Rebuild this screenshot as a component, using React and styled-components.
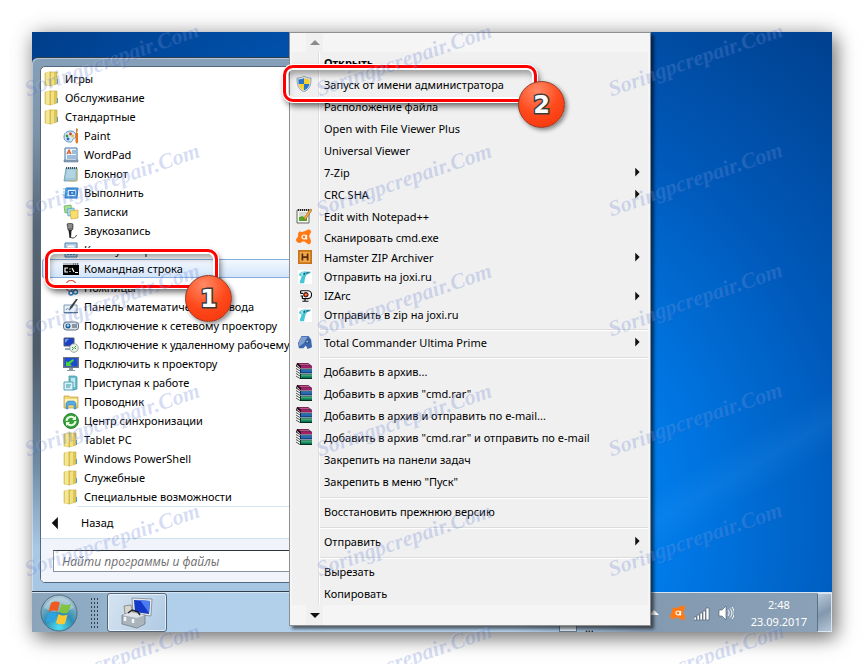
import React, { useState } from "react";
import styled, { createGlobalStyle, css } from "styled-components";

const GlobalStyle = createGlobalStyle`
  * {
    box-sizing: border-box;
  }
  body {
    margin: 0;
    background: #fff;
    font-family: "Noto Sans", "Open Sans", sans-serif;
    font-size: 11px;
    color: #000;
  }
  button {
    font: inherit;
    color: inherit;
    border: 0;
    background: none;
    padding: 0;
    text-align: left;
  }
`;

const Page = styled.div`
  position: relative;
  min-height: 100vh;
  padding: 32px;
  display: flex;
  overflow: hidden;
`;

const Desktop = styled.main`
  position: relative;
  flex: 1;
  display: flex;
  flex-direction: column;
  justify-content: flex-end;
  background: linear-gradient(
      150deg,
      transparent 77%,
      rgba(80, 180, 255, 0.1) 80%,
      transparent 83%
    ),
    radial-gradient(
      ellipse 620px 640px at 52% 82%,
      #0a8cf5 0%,
      #007ae8 36%,
      #0058b8 68%,
      #003f8c 100%
    );
  box-shadow: 4px 6px 18px rgba(0, 0, 0, 0.5), 0 0 22px rgba(0, 0, 0, 0.16);
`;

const StartMenu = styled.nav`
  width: 56%;
  padding: 8px;
  border: 1px solid #2f3c49;
  border-left: 0;
  border-radius: 6px 6px 0 0;
  box-shadow: inset 1px 1px 0 rgba(255, 255, 255, 0.4);
  background: linear-gradient(
    #86a0b9 0%,
    #7d93a8 14%,
    #566575 32%,
    #4d5a68 55%,
    #6f8aa3 76%,
    #a9c8e6 92%,
    #a6c6e4 100%
  );
`;

const Panel = styled.div`
  border: 1px solid #55687b;
  border-radius: 5px;
  background: #fff;
  overflow: hidden;
`;

const Programs = styled.div`
  display: flex;
  flex-direction: column;
  padding: 2px 0 0 1px;
`;

const activeRow = css`
  border-color: #84acdd;
  background: linear-gradient(#f3f8fe, #d3e5fb);
`;

const Program = styled.button`
  position: relative;
  display: flex;
  align-items: center;
  gap: 5px;
  height: 19px;
  padding-left: ${(p) => (p.$nested ? 20 : 1)}px;
  border: 1px solid transparent;
  border-radius: 2px;
  white-space: nowrap;
  ${(p) => p.$active && activeRow}

  svg {
    flex: none;
  }
`;

const BackRow = styled.button`
  display: flex;
  align-items: center;
  gap: 17px;
  width: 100%;
  height: 31px;
  padding-left: 9px;
`;

const Rule = styled.hr`
  height: 1px;
  margin: 0 0 0 36px;
  border: 0;
  background: #d6e5f2;
`;

const SearchBand = styled.div`
  padding: 11px 12px 10px;
  border-top: 1px solid #cfdfef;
  background: #f1f5fb;
`;

const Search = styled.input`
  display: block;
  width: 100%;
  height: 22px;
  padding: 0 8px;
  border: 1px solid #8b949e;
  border-top-color: #30343a;
  background: #fff;
  font: italic 12px "Open Sans", "Noto Sans", sans-serif;

  &::placeholder {
    color: #6d6d6d;
    opacity: 1;
  }
`;

const ContextMenu = styled.div`
  position: absolute;
  z-index: 1;
  top: 0;
  left: 257px;
  width: 362px;
  padding: 0 2px;
  border: 1px solid #8f8f8f;
  background: #f5f5f5;
  box-shadow: 3px 3px 3px rgba(0, 0, 0, 0.55);
`;

const ScrollButton = styled.button`
  display: flex;
  width: 100%;
  height: ${(p) => (p.$up ? 19 : 20)}px;
  padding-left: 14px;
`;

const ScrollFace = styled.span`
  display: grid;
  place-items: center;
  width: 17px;
  background: #f0f0f0;
`;

const Items = styled.div`
  background: linear-gradient(
      90deg,
      transparent 26px,
      #dedede 26px,
      #dedede 27px,
      #fff 27px,
      #fff 28px,
      transparent 28px
    )
    #f0f0f0;
`;

const Item = styled.button`
  position: relative;
  display: grid;
  grid-template-columns: 20px 1fr 18px;
  column-gap: 12px;
  align-items: center;
  justify-items: start;
  width: 100%;
  height: ${(p) => p.$height || 22}px;
  padding-bottom: 2px;
  font-weight: ${(p) => (p.$bold ? 700 : 400)};
  white-space: nowrap;
`;

const Icon = styled.span`
  display: flex;
  justify-self: end;
`;

const Separator = styled.hr`
  height: 8px;
  margin: 0 0 0 28px;
  border: 0;
  background: linear-gradient(
    transparent 4px,
    #dcdcdc 4px,
    #dcdcdc 5px,
    #fff 5px,
    #fff 6px,
    transparent 6px
  );
`;

const Callout = styled.span`
  position: absolute;
  z-index: 2;
  top: ${(p) => p.$top}px;
  left: ${(p) => p.$left}px;
  width: ${(p) => p.$width}px;
  height: ${(p) => p.$height}px;
  border: 3px solid #f00;
  border-radius: 10px;
  box-shadow: 0 0 0 1px #fff, inset 0 0 0 2px #fff, 2px 4px 6px rgba(0, 0, 0, 0.6),
    inset 2px 6px 6px rgba(0, 0, 0, 0.35);
`;

const Badge = styled.span`
  position: absolute;
  right: ${(p) => p.$right}px;
  bottom: ${(p) => p.$bottom}px;
  display: grid;
  place-items: center;
  width: 47px;
  height: 47px;
  border: 1px solid #8d3a26;
  border-radius: 50%;
  background: radial-gradient(circle at 40% 20%, #ff8a66, #ff4a1c 50%, #f23208);
  box-shadow: 2px 2px 4px rgba(0, 0, 0, 0.45);
  color: #fff;
  font: bold 24px "DejaVu Sans", sans-serif;
  -webkit-text-stroke: 3px #3c3c3c;
  paint-order: stroke fill;
`;

const Taskbar = styled.footer`
  display: flex;
  align-items: stretch;
  height: 40px;
  border-top: 1px solid #d5e4f2;
  background: linear-gradient(
    90deg,
    #8ba4ba 0,
    #8fabc4 7%,
    #b0cfea 17%,
    #b3d0ea 60%,
    #8299b0 76%,
    #8ba1b7 100%
  );
`;

const StartButton = styled.button`
  display: grid;
  place-items: center;
  width: 54px;
`;

const Grip = styled.span`
  width: 9px;
  margin: 4px 8px 4px 4px;
  background: radial-gradient(circle, #33404d 1px, transparent 1px) 0 0 / 3px 4px;
`;

const TaskButton = styled.button`
  display: grid;
  place-items: center;
  width: 60px;
  border: 1px solid #54677a;
  border-radius: 3px;
  background: linear-gradient(120deg, #d6e4f1, #c3d7ea 50%, #aecae4);
  box-shadow: inset 0 0 0 1px rgba(255, 255, 255, 0.6);
`;

const LanguageBar = styled.span`
  display: flex;
  align-items: flex-end;
  gap: 8px;
  margin-left: auto;
  margin-right: 52px;
  line-height: 8px;

  &::before {
    content: "";
    width: 16px;
    height: 100%;
    border: 1px solid #64788c;
    background: #dfeaf5;
  }
`;

const Tray = styled.div`
  display: flex;
  align-items: center;
  gap: 8px;
`;

const Clock = styled.time`
  display: flex;
  flex-direction: column;
  align-items: center;
  margin: 0 2px 0 9px;
  line-height: 17px;
  color: #fff;
`;

const ShowDesktop = styled.button`
  align-self: stretch;
  width: 15px;
  border: 1px solid #dbe6f0;
  border-left-color: #5d7185;
  background: linear-gradient(150deg, #b9c9d9, #8298ae 50%, #b5c6d7);
`;

const Watermarks = styled.div`
  position: absolute;
  z-index: 3;
  inset: 0;
  display: grid;
  grid-template-columns: repeat(3, 292px);
  grid-auto-rows: 120px;
  overflow: hidden;
  pointer-events: none;
`;

const Mark = styled.span`
  display: grid;
  place-items: center;
  padding: 0 68px 0 0;

  span {
    transform: rotate(-19deg);
    font: italic bold 22px "Liberation Serif", serif;
    color: rgba(44, 84, 196, 0.2);
    text-shadow: -1px -1px 0 rgba(255, 255, 255, 0.12);
    white-space: nowrap;
  }
`;

const Svg = ({ size = 16, children }) => (
  <svg width={size} height={size} viewBox="0 0 16 16" aria-hidden="true">
    {children}
  </svg>
);

const FolderIcon = () => (
  <Svg>
    <path d="M1 2l6-1v14l-6-1z" fill="#e6d067" stroke="#cdb552" strokeWidth=".6" />
    <path d="M2 2l4-2v14l-4 1z" fill="#f3e694" />
    <path d="M6 1l7 0v12l-7 2z" fill="#dfc654" stroke="#c4a643" strokeWidth=".6" />
    <path d="M7 2l3-1v13l-3 1z" fill="#f1e182" />
    <path d="M13 8h1v5h-1z" fill="#4d9bd8" />
  </Svg>
);

const PaintIcon = () => (
  <Svg>
    <path
      d="M1 9c0-4 3-6 7-6 3 0 5 2 5 5 0 2-2 2-3 3s0 3-3 3c-4 0-6-2-6-5z"
      fill="#d7e8f5"
      stroke="#5c93bf"
    />
    <circle cx="4" cy="8" r="1.4" fill="#3b9a3a" />
    <circle cx="7.5" cy="6" r="1.4" fill="#d03d32" />
    <circle cx="5" cy="11" r="1.4" fill="#2b66c4" />
    <circle cx="9.5" cy="8" r="1.2" fill="#e6b423" />
    <path d="M13 0l2 1-1 5h-1z" fill="#c58b47" />
    <path d="M12.500 5h2.500v9l-1 2-1.500-2z" fill="#e9731b" />
  </Svg>
);

const WordPadIcon = () => (
  <Svg>
    <path d="M2 1h12v13H2z" fill="#eef5fc" stroke="#4374a8" />
    <path d="M1 13h14v2H1z" fill="#8fa7bf" stroke="#4f6a85" strokeWidth=".5" />
    <path d="M4 7l2-4 2 4M5 6h2" fill="none" stroke="#d65a1e" strokeWidth="1.2" />
    <path d="M9 4h4M9 6h4M4 9h9M4 11h9" stroke="#4b84be" />
  </Svg>
);

const NotepadIcon = () => (
  <Svg>
    <path d="M3 2h11v12l-2 1H1z" fill="#9fc9da" stroke="#5e8b9c" strokeWidth=".7" />
    <path d="M4 5h8M4 7h8M3 9h9M3 11h9" stroke="#c4e0ea" />
    <path d="M3 2h11" stroke="#3e5660" strokeWidth="2" strokeDasharray="1 1" />
    <path d="M14 3v12H6" stroke="#c8b66f" fill="none" />
  </Svg>
);

const RunIcon = () => (
  <Svg>
    <path d="M3 3h12l-1 10H2z" fill="#4b9fe2" stroke="#2573b8" />
    <path d="M5 5h8l-.5 6H4.500z" fill="#e6f3fd" />
    <path d="M6 6h6v4H6z" fill="#2a78c4" />
    <path d="M8 7.500h2v1H8z" fill="#fff" />
    <path d="M0 4h4M0 7h3M0 10h3" stroke="#68b0ea" />
  </Svg>
);

const NotesIcon = () => (
  <Svg>
    <path d="M1 2l7-1 1 7-7 1z" fill="#a9df92" stroke="#5da84e" strokeWidth=".7" />
    <path d="M4 5l7-1 1 7-7 1z" fill="#a7dbf0" stroke="#5198bb" strokeWidth=".7" />
    <path d="M7 7l8-1v8l-7 1z" fill="#f8df73" stroke="#cba935" strokeWidth=".7" />
  </Svg>
);

const MicIcon = () => (
  <Svg>
    <path d="M4 1l3-1 3 1v5l-2 2-3-1z" fill="#6e6e6e" stroke="#333" strokeWidth=".6" />
    <path d="M5.500 7h3l-.5 8H6.500z" fill="#222" />
    <path d="M7.500 14c2 2 5 1 6-2" fill="none" stroke="#444" />
    <path d="M5 2h4M5 4h4" stroke="#ccc" strokeWidth=".6" />
  </Svg>
);

const CalcIcon = () => (
  <Svg>
    <path d="M2 1h12v14H2z" fill="#c5dcf0" stroke="#4a7caa" />
    <path d="M4 3h8v3H4z" fill="#fff" stroke="#6e94b7" strokeWidth=".5" />
    <path d="M4 8.500h8M4 10.500h8M4 12.500h8" stroke="#4d87bd" strokeDasharray="2 1" />
  </Svg>
);

const ConsoleIcon = () => (
  <Svg>
    <path d="M0 2h16v12H0z" fill="#000" />
    <path d="M0 2h16v2H0z" fill="#b9c0c8" />
    <path
      d="M5 7H2v4h3M7 7.500v1M7 10v1M9 7l2 4M12 11.500h3"
      fill="none"
      stroke="#fff"
      strokeWidth="1.2"
    />
    <path d="M10 3h5" stroke="#333" strokeDasharray="1 1" />
  </Svg>
);

const ScissorsIcon = () => (
  <Svg>
    <circle cx="8" cy="6" r="5.5" fill="#fff" stroke="#d6584c" strokeWidth="1.2" />
    <path d="M4 3l7 8M12 3L8 11" stroke="#7d8a95" />
    <circle cx="8" cy="13" r="2" fill="none" stroke="#2f7dc2" strokeWidth="1.4" />
    <circle cx="12.5" cy="12" r="2" fill="none" stroke="#2f7dc2" strokeWidth="1.4" />
  </Svg>
);

const MathIcon = () => (
  <Svg>
    <path d="M1 6h13v8H1z" fill="#e7eff6" stroke="#8198ac" />
    <path d="M1 13h14v1H1z" fill="#4d6c88" />
    <path d="M3 11c2-4 3 2 5-1" stroke="#5a9bd0" fill="none" />
    <path d="M15 0L9 9l-3 2 1-3 6-8z" fill="#3a4148" />
  </Svg>
);

const NetProjectorIcon = () => (
  <Svg>
    <rect x="0.5" y="4" width="15" height="8" rx="3" fill="#dce3ea" stroke="#5d6e7e" />
    <circle cx="5" cy="8" r="2.5" fill="#1f5e96" />
    <circle cx="5" cy="7.5" r="1.2" fill="#9fe0ff" />
    <path d="M9 7h5M9 9h5" stroke="#35495d" />
  </Svg>
);

const RemoteIcon = () => (
  <Svg>
    <path d="M1 1h10v8H1z" fill="#1d3fc4" stroke="#4e5f75" />
    <path d="M2 11h8v2H2z" fill="#9aa9b8" />
    <path d="M2 2h4L2 6z" fill="#6f95f1" />
    <circle cx="11" cy="11" r="4.3" fill="#e9efe9" stroke="#8a9a8a" strokeWidth=".8" />
    <path
      d="M9 10l1.500 1.500L9 13M13 9l-1.500 1.500L13 12"
      fill="none"
      stroke="#2e9438"
    />
  </Svg>
);

const ProjectorIcon = () => (
  <Svg>
    <path d="M0 1h16v11H0z" fill="#6b7782" />
    <path d="M1.500 2h13v8.500h-13z" fill="#1f4bd0" />
    <path d="M3 10V5l1.500 1.500L10 3l1 1.500-4 3.500 2 2z" fill="#49d43a" />
    <path d="M6 12h4v2h2v1H4v-1h2z" fill="#8c98a4" />
  </Svg>
);

const GettingStartedIcon = () => (
  <Svg>
    <path d="M6 1h6l2 1v12l-3 1-5-1z" fill="#6cc0ce" stroke="#39899a" strokeWidth=".7" />
    <path d="M8 3h4v9H8z" fill="#bfe9ee" />
    <path d="M1 7h9v8H1z" fill="#d9f1f7" stroke="#4fa3b8" />
    <path d="M3 10h5M3 12h4" stroke="#3a93ad" />
  </Svg>
);

const ExplorerIcon = () => (
  <Svg>
    <path d="M1 2h5l1 1h8v11H1z" fill="#f1d679" stroke="#c09c38" strokeWidth=".7" />
    <path d="M2 5h12v5H2z" fill="#fff3b8" />
    <path
      d="M3 15V9l2-2h6l2 2v6h-2v-4H5v4z"
      fill="#5aaae2"
      stroke="#2f7dbb"
      strokeWidth=".5"
    />
  </Svg>
);

const SyncIcon = () => (
  <Svg>
    <circle cx="8" cy="8" r="7.5" fill="#37a03a" stroke="#187024" strokeWidth=".8" />
    <path
      d="M3.500 8a4.500 4.500 0 0 1 8-2.500M12.500 8a4.500 4.500 0 0 1-8 2.500"
      fill="none"
      stroke="#e9ffe6"
      strokeWidth="2"
    />
    <path d="M13 3v4H9zM3 13V9h4z" fill="#e9ffe6" />
  </Svg>
);

const ShieldIcon = () => (
  <Svg>
    <path
      d="M8 0c2 1.500 4 2 7 2 0 7-1 11-7 14C2 13 1 9 1 2c3 0 5-.5 7-2z"
      fill="#dfe7ee"
      stroke="#71818f"
      strokeWidth=".7"
    />
    <path d="M8 2v6H2.600c-.2-1.400-.3-3-.3-4.600C5 3.300 6.500 3 8 2z" fill="#2a77c9" />
    <path d="M8 2v6h5.400c.2-1.400.3-3 .3-4.600C11 3.300 9.500 3 8 2z" fill="#f6cf30" />
    <path d="M8 8H2.600c.6 3 2 5 5.400 6.500z" fill="#f6cf30" />
    <path d="M8 8h5.400c-.6 3-2 5-5.400 6.500z" fill="#2a77c9" />
  </Svg>
);

const NotepadPlusIcon = () => (
  <Svg>
    <path d="M1 2h12v13H1z" fill="#f7f9f4" stroke="#666" />
    <path d="M2 2h11" stroke="#222" strokeWidth="2" strokeDasharray="1 1" />
    <path d="M3 5h8M3 7h6" stroke="#b3b9b0" />
    <path d="M3 9l3-1 5 2v3H3z" fill="#55a52c" />
    <path
      d="M14 1l2 1-6 9-2 1 0-2z"
      fill="#f1b13c"
      stroke="#8a4d1d"
      strokeWidth=".6"
    />
  </Svg>
);

const AvastIcon = () => (
  <Svg>
    <path
      d="M3 3c1-1 2 0 3 0l3-1c2-1 4-2 5-1 2 1 1 3 0 4-1 2-1 3 0 4l1 3c0 2-1 4-3 3l-3-2c-2-1-3 0-5 1-2 0-4-1-4-3s2-2 2-4 0-3 1-4z"
      fill="#ff7a14"
    />
    <circle cx="8" cy="8" r="2" fill="none" stroke="#fff" strokeWidth="1.2" />
    <path d="M10.500 6v4.500" stroke="#fff" strokeWidth="1.2" />
  </Svg>
);

const HamsterIcon = () => (
  <Svg size={14}>
    <path d="M0 0h16v16H0z" fill="#c8741c" />
    <path d="M2 2h12v12H2z" fill="#f0a848" />
    <path d="M5 4v8M11 4v8M5 8h6" stroke="#5a2b0a" strokeWidth="2" />
  </Svg>
);

const JoxiIcon = () => (
  <Svg size={14}>
    <path d="M0 0h16v16H0z" fill="#fff" />
    <path d="M1 6c1-4 5-5 9-4l5 1-5 2c-2 3-2 5-3 10H2c0-4 2-5 2-8z" fill="#45c6d8" />
    <path d="M10 2l5 0-6 3z" fill="#327a8a" />
    <path d="M3 4l3-2 2 3-4 2z" fill="#9be6ee" />
    <circle cx="7" cy="4.5" r="1" fill="#134" />
  </Svg>
);

const IzarcIcon = () => (
  <Svg size={14}>
    <path
      d="M3 2h8a4 4 0 0 1 0 9H5M3 5h3M3 8h3M3 5v-3M5 11V8M8 11v3M5 14h7"
      fill="#fff"
      stroke="#111"
      strokeWidth="1.4"
    />
    <circle cx="9" cy="6.5" r="2.6" fill="#e02818" stroke="#111" />
    <path d="M8 6h2v1H8z" fill="#ffe23c" />
  </Svg>
);

const CommanderIcon = () => (
  <Svg size={14}>
    <path d="M4 1h8l3 4 1 9-5 2-2-4-3 3H1L0 9z" fill="#3a67ae" />
    <path d="M4 2h7l-2 4-3 4-5 3V8z" fill="#7f9fce" />
    <path d="M9 6h3v3H9z" fill="#b9cde6" stroke="#24487f" />
  </Svg>
);

const RarIcon = () => (
  <Svg>
    <path d="M1 0h11l4 3v2.500H4L0 3z" fill="#2b0a1c" />
    <path d="M2 .5h10L15 2.500H5z" fill="#c2508e" />
    <path d="M5 3h11v2H5z" fill="#a31e68" />
    <path d="M1 3l3 2.500V4.500L1 2zM1 6l3 1h12v3.500H4L0 8z" fill="#fff" />
    <path d="M4 6h12v4.500H4z" fill="#0b2a55" />
    <path d="M5 6.500h11v1H5z" fill="#69b4ea" />
    <path d="M5 7.500h11V9.500H5z" fill="#2368b4" />
    <path d="M1 10.500l3 1.500h12v4H4L0 13z" fill="#fff" />
    <path d="M4 11h12v5H4z" fill="#06331f" />
    <path d="M5 11.500h11v1.200H5z" fill="#7ddfb0" />
    <path d="M5 12.700h11v2H5z" fill="#189065" />
    <path d="M0 3l4 2.500M0 5.500L4 8M0 8l4 2.500M0 10.500L4 13M0 13l4 2.500" stroke="#222" strokeWidth=".8" />
  </Svg>
);

const Orb = () => (
  <svg width="38" height="38" viewBox="0 0 38 38" aria-hidden="true">
    <defs>
      <radialGradient id="orb" cx="50%" cy="90%" r="90%">
        <stop offset="0" stopColor="#4ee0f2" />
        <stop offset=".45" stopColor="#2f8cb4" />
        <stop offset="1" stopColor="#b4c8d4" />
      </radialGradient>
    </defs>
    <circle cx="19" cy="19" r="18" fill="url(#orb)" stroke="#4f6b80" />
    <path d="M4 14a16 16 0 0 1 30 0c-9 5-20 6-30 0z" fill="#fff" opacity=".3" />
    <path d="M11 9c3-2 6-2 9-.5l-2.500 9c-2-1.500-6-1.500-9 0z" fill="#ee5a24" />
    <path d="M21.500 9.500c3 2 6 2 10 0l-3.500 9c-3 1.500-6 1-9-.5z" fill="#83c341" />
    <path d="M8 19.500c3-1.500 6-1.500 9 0l-2.500 9c-3-1.500-6-1.500-9 0z" fill="#2fa3e0" />
    <path d="M18.500 20c3 2 6 2 9 .5l-2.500 9c-3 1.500-6 1-9-.5z" fill="#fdc82f" />
  </svg>
);

const ToolboxIcon = () => (
  <svg width="34" height="32" viewBox="0 0 34 32" aria-hidden="true">
    <path
      d="M12 1l20 1-1 17-18-2z"
      fill="#e4e8eb"
      stroke="#6e7b86"
      strokeWidth=".7"
    />
    <path d="M14 3l16 1-1 13-14-2z" fill="#1439c8" />
    <path d="M20 3l10 1-1 12z" fill="#4c7cf0" />
    <path d="M4 9l7-1 2 8-8 1z" fill="#d6d6cf" stroke="#70706a" strokeWidth=".7" />
    <path
      d="M2 18l9-3 14 3v9l-8 4-15-4z"
      fill="#a9b4bc"
      stroke="#68747d"
      strokeWidth=".7"
    />
    <path d="M2 18l15 3 8-3-14-3z" fill="#dce2e6" />
    <path d="M8 16l4-3 6 2 2 3" fill="none" stroke="#222" strokeWidth="1.5" />
    <path d="M5 20v4M13 22v4" stroke="#f4f6f8" strokeWidth="2.5" />
  </svg>
);

const SignalIcon = () => (
  <Svg>
    <path
      d="M0 12h2.500v3H0zM3 10h2.500v5H3zM6 8h2.500v7H6zM9 6h2.500v9H9zM12 3h3v12h-3z"
      fill="#fff"
      stroke="#46586a"
      strokeWidth=".6"
    />
  </Svg>
);

const SpeakerIcon = () => (
  <Svg>
    <path d="M1 5h3l4-4v14l-4-4H1z" fill="#fff" stroke="#46586a" strokeWidth=".6" />
    <path
      d="M10 5c1.500 2 1.500 4 0 6M12 3.500c2.500 3 2.500 6 0 9M14 2c3 4 3 8 0 12"
      fill="none"
      stroke="#fff"
    />
  </Svg>
);

const Triangle = ({ dir, color = "#111" }) => {
  const shapes = {
    up: "M3 10l5-5 5 5z",
    down: "M3 6h10l-5 5z",
    right: "M6 3l5 5-5 5z",
    left: "M9 1v14L2 8z",
  };
  return (
    <Svg size={dir === "left" || dir === "right" ? 14 : 16}>
      <path d={shapes[dir]} fill={color} />
    </Svg>
  );
};

const programs = [
  { name: "Игры", icon: FolderIcon },
  { name: "Обслуживание", icon: FolderIcon },
  { name: "Стандартные", icon: FolderIcon },
  { name: "Paint", icon: PaintIcon, nested: true },
  { name: "WordPad", icon: WordPadIcon, nested: true },
  { name: "Блокнот", icon: NotepadIcon, nested: true },
  { name: "Выполнить", icon: RunIcon, nested: true },
  { name: "Записки", icon: NotesIcon, nested: true },
  { name: "Звукозапись", icon: MicIcon, nested: true },
  { name: "Калькулятор", icon: CalcIcon, nested: true },
  { name: "Командная строка", icon: ConsoleIcon, nested: true, step: 1 },
  { name: "Ножницы", icon: ScissorsIcon, nested: true },
  { name: "Панель математического ввода", icon: MathIcon, nested: true },
  { name: "Подключение к сетевому проектору", icon: NetProjectorIcon, nested: true },
  { name: "Подключение к удаленному рабочему столу", icon: RemoteIcon, nested: true },
  { name: "Подключить к проектору", icon: ProjectorIcon, nested: true },
  { name: "Приступая к работе", icon: GettingStartedIcon, nested: true },
  { name: "Проводник", icon: ExplorerIcon, nested: true },
  { name: "Центр синхронизации", icon: SyncIcon, nested: true },
  { name: "Tablet PC", icon: FolderIcon, nested: true },
  { name: "Windows PowerShell", icon: FolderIcon, nested: true },
  { name: "Служебные", icon: FolderIcon, nested: true },
  { name: "Специальные возможности", icon: FolderIcon, nested: true },
];

const actions = [
  { name: "Открыть", bold: true },
  { name: "Запуск от имени администратора", icon: ShieldIcon, step: 2 },
  { name: "Расположение файла" },
  { name: "Open with File Viewer Plus" },
  { name: "Universal Viewer" },
  { name: "7-Zip", more: true },
  { name: "CRC SHA", more: true },
  { name: "Edit with Notepad++", icon: NotepadPlusIcon },
  { name: "Сканировать cmd.exe", icon: AvastIcon, height: 20 },
  { name: "Hamster ZIP Archiver", icon: HamsterIcon, height: 20, more: true },
  { name: "Отправить на joxi.ru", icon: JoxiIcon, height: 19 },
  { name: "IZArc", icon: IzarcIcon, height: 19, more: true },
  { name: "Отправить в zip на joxi.ru", icon: JoxiIcon, height: 19 },
  null,
  { name: "Total Commander Ultima Prime", icon: CommanderIcon, height: 20, more: true },
  null,
  { name: "Добавить в архив...", icon: RarIcon },
  { name: 'Добавить в архив "cmd.rar"', icon: RarIcon },
  { name: "Добавить в архив и отправить по e-mail...", icon: RarIcon },
  { name: 'Добавить в архив "cmd.rar" и отправить по e-mail', icon: RarIcon },
  { name: "Закрепить на панели задач" },
  { name: 'Закрепить в меню "Пуск"' },
  null,
  { name: "Восстановить прежнюю версию" },
  null,
  { name: "Отправить", more: true },
  null,
  { name: "Вырезать" },
  { name: "Копировать" },
];

const App = () => {
  const [query, setQuery] = useState("");

  return (
    <Page>
      <GlobalStyle />
      <Desktop>
        <StartMenu>
          <Panel>
            <Programs>
              {programs.map(({ name, icon: ProgramIcon, nested, step }) => (
                <Program key={name} $nested={nested} $active={Boolean(step)}>
                  <ProgramIcon />
                  {name}
                  {step && (
                    <Callout $top={-11} $left={2} $width={173} $height={39}>
                      <Badge $right={-17} $bottom={-37}>
                        {step}
                      </Badge>
                    </Callout>
                  )}
                </Program>
              ))}
            </Programs>
            <Rule />
            <BackRow>
              <Triangle dir="left" />
              Назад
            </BackRow>
            <SearchBand>
              <Search
                aria-label="Найти программы и файлы"
                placeholder="Найти программы и файлы"
                value={query}
                onChange={(e) => setQuery(e.target.value)}
              />
            </SearchBand>
          </Panel>
        </StartMenu>
        <Taskbar>
          <StartButton aria-label="Пуск">
            <Orb />
          </StartButton>
          <Grip />
          <TaskButton aria-label="Администрирование">
            <ToolboxIcon />
          </TaskButton>
          <LanguageBar>...</LanguageBar>
          <Tray>
            <Triangle dir="up" color="#fff" />
            <AvastIcon />
            <SignalIcon />
            <SpeakerIcon />
            <Clock>
              <span>2:48</span>
              <span>23.09.2017</span>
            </Clock>
            <ShowDesktop aria-label="Свернуть все окна" />
          </Tray>
        </Taskbar>
        <ContextMenu>
          <ScrollButton $up aria-label="Вверх">
            <ScrollFace>
              <Triangle dir="up" color="#8c8c8c" />
            </ScrollFace>
          </ScrollButton>
          <Items>
            {actions.map((action, index) => {
              if (!action) return <Separator key={index} />;
              const { name, icon: ActionIcon, bold, height, more, step } = action;
              return (
                <Item key={name} $bold={bold} $height={height}>
                  <Icon>{ActionIcon && <ActionIcon />}</Icon>
                  <span>{name}</span>
                  {more && <Triangle dir="right" />}
                  {step && (
                    <Callout $top={-9} $left={-9} $width={254} $height={37}>
                      <Badge $right={-31} $bottom={-29}>
                        {step}
                      </Badge>
                    </Callout>
                  )}
                </Item>
              );
            })}
          </Items>
          <ScrollButton aria-label="Вниз">
            <ScrollFace>
              <Triangle dir="down" />
            </ScrollFace>
          </ScrollButton>
        </ContextMenu>
      </Desktop>
      <Watermarks aria-hidden="true">
        {Array.from({ length: 18 }, (_, i) => (
          <Mark key={i}>
            <span>Soringpcrepair.Com</span>
          </Mark>
        ))}
      </Watermarks>
    </Page>
  );
};

export default App;
